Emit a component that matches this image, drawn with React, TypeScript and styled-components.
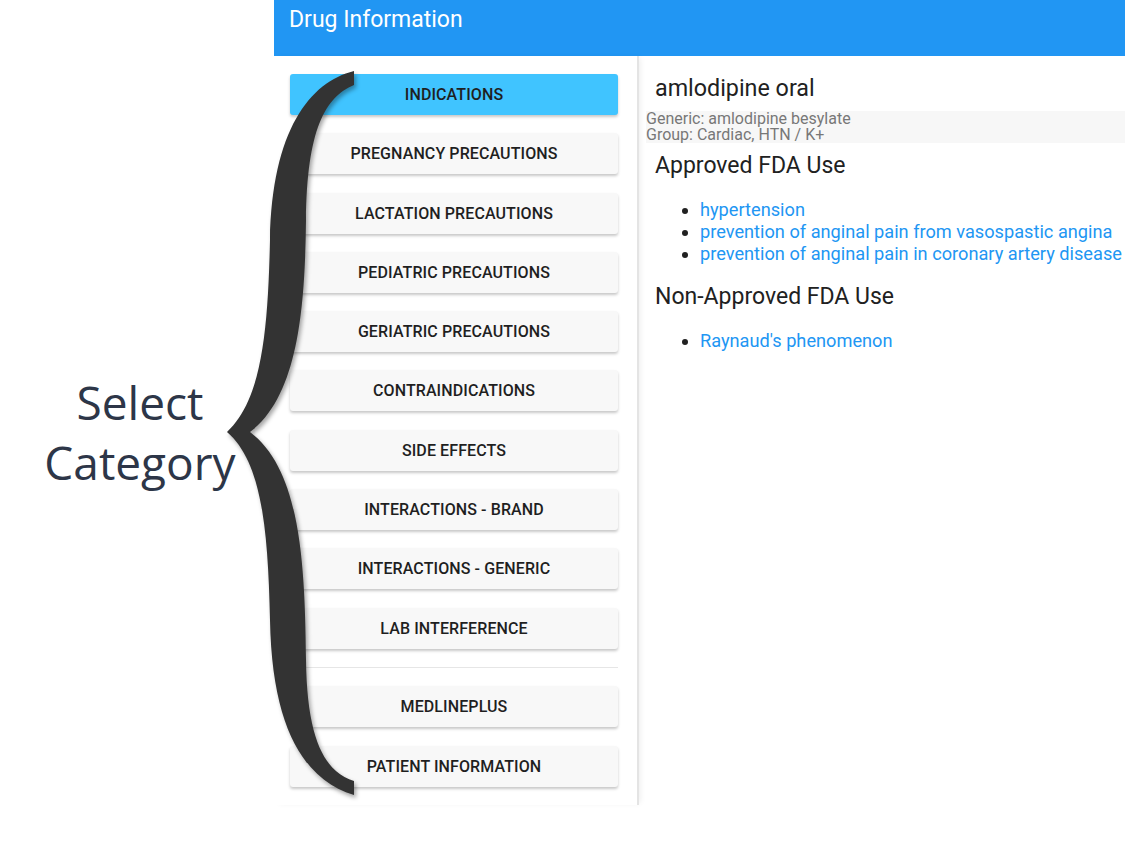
import React, {useState} from 'react';
import styled, {createGlobalStyle} from "styled-components";

const GlobalStyle = createGlobalStyle`
  body {
    margin: 0;
    background: #fff;
    font-family: Roboto, "Liberation Sans", sans-serif;
  }
`;

const categories = [
    'Indications',
    'Pregnancy Precautions',
    'Lactation Precautions',
    'Pediatric Precautions',
    'Geriatric Precautions',
    'Contraindications',
    'Side Effects',
    'Interactions - Brand',
    'Interactions - Generic',
    'Lab Interference',
];

const links = ['MedlinePlus', 'Patient Information'];

const approved = [
    'hypertension',
    'prevention of anginal pain from vasospastic angina',
    'prevention of anginal pain in coronary artery disease',
];

const nonApproved = ["Raynaud's phenomenon"];

const Brace = () => (
    <BraceSvg width="140" height="740" viewBox="220 62 140 740">
        <path
            d="M354,71 C310,82 272,130 270,240 C268,330 262,400 227,432 C262,462 268,530 270,620
               C272,730 305,780 354,795 L354,781 C325,772 307,740 306,660 C305,560 300,470 250,432
               C300,395 305,300 306,220 C307,130 325,97 354,85 Z"
            fill="#333"
        />
    </BraceSvg>
);

export default function App() {
    const [active, setActive] = useState('Indications');

    return (
        <Page>
            <GlobalStyle/>
            <Annotation>
                <span>Select</span>
                <span>Category</span>
            </Annotation>
            <Brace/>
            <Main>
                <Header>Drug Information</Header>
                <Body>
                    <Nav>
                        {categories.map(c => (
                            <NavButton key={c} $active={active === c} onClick={() => setActive(c)}>
                                {c}
                            </NavButton>
                        ))}
                        <Divider/>
                        {links.map(c => (
                            <NavButton key={c} $active={active === c} onClick={() => setActive(c)}>
                                {c}
                            </NavButton>
                        ))}
                    </Nav>
                    <Content>
                        <DrugName>amlodipine oral</DrugName>
                        <Meta>
                            <div>Generic: amlodipine besylate</div>
                            <div>Group: Cardiac, HTN / K+</div>
                        </Meta>
                        <Section>Approved FDA Use</Section>
                        <UseList>
                            {approved.map(a => <li key={a}>{a}</li>)}
                        </UseList>
                        <Section>Non-Approved FDA Use</Section>
                        <UseList>
                            {nonApproved.map(a => <li key={a}>{a}</li>)}
                        </UseList>
                    </Content>
                </Body>
            </Main>
        </Page>
    );
}

const Page = styled.div`
  position: relative;
  display: flex;
  min-height: 857px;
`;

const Annotation = styled.div`
  width: 274px;
  flex-shrink: 0;
  padding: 372px 0 0 6px;
  box-sizing: border-box;
  display: flex;
  flex-direction: column;
  align-items: center;
  font-family: "Open Sans", "DejaVu Sans", sans-serif;
  font-size: 46px;
  line-height: 60px;
  color: #2d3648;
`;

const BraceSvg = styled.svg`
  position: absolute;
  left: 220px;
  top: 62px;
  filter: drop-shadow(2px 3px 2px rgba(0, 0, 0, 0.35));
  pointer-events: none;
`;

const Main = styled.div`
  flex: 1;
  display: flex;
  flex-direction: column;
`;

const Header = styled.header`
  height: 56px;
  box-sizing: border-box;
  background-color: #2196f3;
  color: #fff;
  font-size: 23px;
  line-height: 24px;
  padding: 8px 15px;
`;

const Body = styled.div`
  display: flex;
`;

const Nav = styled.nav`
  width: 365px;
  flex-shrink: 0;
  box-sizing: border-box;
  padding: 18px 19px 18px 16px;
  display: flex;
  flex-direction: column;
  gap: 18.3px;
  border-right: 2px solid #e4e4e4;
  box-shadow: 3px 0 6px -2px rgba(0, 0, 0, 0.08);
`;

const NavButton = styled.button<{ $active: boolean }>`
  height: 41px;
  border: none;
  border-radius: 3px;
  background: ${(props) => props.$active ? '#40c4ff' : '#f8f8f8'};
  box-shadow: 0 2px 3px rgba(0, 0, 0, 0.22);
  font-family: Roboto, "Liberation Sans", sans-serif;
  font-weight: 500;
  font-size: 16px;
  letter-spacing: 0.1px;
  text-transform: uppercase;
  color: #1f1f1f;
  cursor: pointer;
`;

const Divider = styled.hr`
  margin: 0;
  border: none;
  border-top: 1px solid #e6e6e6;
`;

const Content = styled.section`
  flex: 1;
  padding: 0 0 0 7px;
  color: #212121;
`;

const DrugName = styled.h2`
  margin: 0 0 9px;
  padding: 18px 9px 0;
  font-size: 23.3px;
  font-weight: 400;
  line-height: 28px;
`;

const Meta = styled.div`
  background: #f7f7f7;
  color: #777;
  font-size: 16px;
  line-height: 16px;
`;

const Section = styled.h3`
  margin: 9px 0 0;
  padding: 0 9px;
  font-size: 23px;
  font-weight: 400;
  line-height: 28px;
`;

const UseList = styled.ul`
  margin: 19px 0 18px;
  padding-left: 54px;
  font-size: 18.2px;
  line-height: 22px;
  color: #2196f3;

  li::marker {
    color: #212121;
  }
`;
